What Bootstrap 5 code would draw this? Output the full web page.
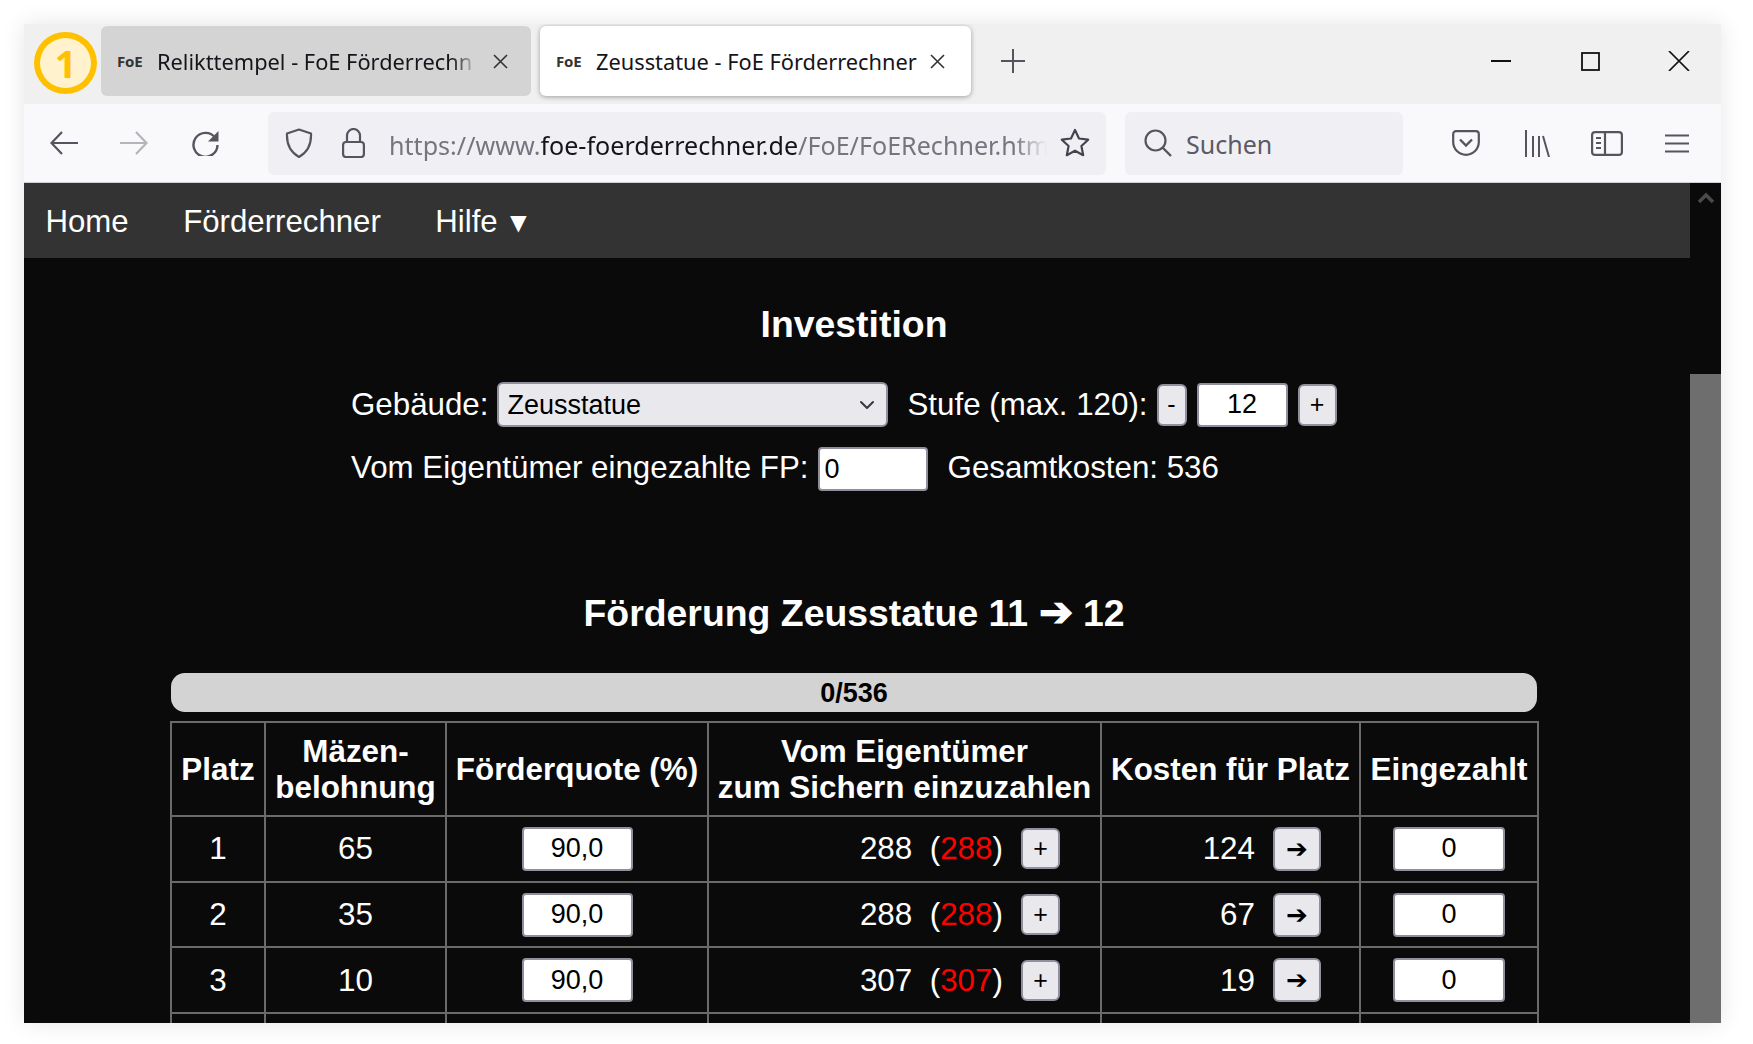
<!DOCTYPE html>
<html lang="de">
<head>
<meta charset="utf-8">
<title>Zeusstatue - FoE Förderrechner</title>
<link href="https://cdn.jsdelivr.net/npm/bootstrap@5.3.0/dist/css/bootstrap.min.css" rel="stylesheet">
<style>
html,body{height:100%;}
body{background:#fff;overflow:hidden;font-family:"Liberation Sans",Arial,sans-serif;}
.win{margin:24px 0 0 24px;width:1697px;height:999px;overflow:hidden;box-shadow:0 0 22px rgba(0,0,0,.10);}
.strip{height:80px;background:#f0f0f0;font-family:"Noto Sans",sans-serif;flex:none;padding-bottom:6px;}
.step{width:63px;height:62px;margin:4px 0 0 10px;background:#fff2cc;border:6px solid #ffc000;border-radius:50%;color:#ffc000;font-weight:700;font-size:38px;line-height:1;flex:none;}
.tabx{height:70px;border-radius:6px;flex:none;font-size:21.8px;color:#15141a;}
.tab-a{width:430px;margin-left:4px;background:#d4d4d4;padding-left:16px;}
.tab-b{width:431px;margin-left:9px;background:#fff;padding-left:16px;box-shadow:0 1px 5px rgba(0,0,0,.35);}
.fav{width:40px;flex:none;font-size:15px;font-weight:700;color:#333;letter-spacing:-.2px;}
.tab-title{white-space:nowrap;flex:none;padding-top:3px;}
.tab-a .tab-title{width:320px;-webkit-mask-image:linear-gradient(90deg,#000 92%,transparent);mask-image:linear-gradient(90deg,#000 92%,transparent);}
.tab-b .tab-title{width:326px;}
.x-a{margin-left:16px;flex:none;}
.x-b{margin-left:8px;flex:none;}
.plus{margin-left:30px;flex:none;}
.w-min{margin-left:466px;flex:none;}
.w-max{margin-left:70px;flex:none;}
.w-close{margin-left:68px;flex:none;}
.tools{height:79px;background:#f9f9fb;border-bottom:1px solid #cfcfd8;flex:none;font-family:"Noto Sans",sans-serif;}
.t-back{margin-left:26px;flex:none;}
.t-fwd{margin-left:42px;flex:none;}
.t-rel{margin-left:43px;flex:none;}
.urlbar{margin-left:48px;width:838px;height:63px;background:#f0f0f4;border-radius:6px;padding-left:17px;flex:none;}
.t-lock{margin-left:29px;flex:none;}
.urltext{margin-left:24px;width:658px;padding-top:6px;font-size:25.1px;white-space:nowrap;color:#75757f;flex:none;-webkit-mask-image:linear-gradient(90deg,#000 95%,transparent);mask-image:linear-gradient(90deg,#000 95%,transparent);}
.urltext b{font-weight:400;color:#15141a;}
.t-star{margin-left:13px;flex:none;}
.searchbar{margin-left:19px;width:278px;height:63px;background:#f0f0f4;border-radius:6px;padding-left:19px;flex:none;}
.searchtext{margin-left:14px;padding-top:4px;font-size:25px;color:#5b5b66;}
.t-pocket{margin-left:49px;flex:none;}
.t-lib{margin-left:44px;flex:none;}
.t-side{margin-left:41px;flex:none;}
.t-menu{margin-left:42px;flex:none;}
.pagewrap{flex:1 1 auto;min-height:0;background:#0a0a0a;color:#fff;}
.content{width:1666px;flex:none;overflow:hidden;}
.scrolltrack{width:31px;flex:none;background:#0a0a0a;}
.scrollup{height:191px;flex:none;padding-top:9px;}
.scrollthumb{flex:1 1 auto;background:#6e6e6e;}
.sitenav{height:75px;background:#333;padding:3px 0 0 21.5px;}
.sitenav a{color:#fff;text-decoration:none;font-size:31.2px;padding:0 27.5px 0 0;margin-right:27px;}
.sitenav a:last-child{margin-right:0;}
.tri{font-size:28px;line-height:1;margin-left:-2px;}
.h-a{font-size:37.4px;font-weight:700;line-height:42px;margin:45px 0 0;text-align:center;width:1660px;}
.h-b{font-size:37.4px;font-weight:700;line-height:42px;margin:0;text-align:center;width:1660px;}
.arr{font-size:41px;line-height:1;}
.formbox{margin:37px 0 0 327px;font-size:31.3px;line-height:45px;}
.formrow{height:45px;}
.formrow2{margin-top:20px;height:44px;margin-bottom:101px;}
.formrow2 span{padding-bottom:3px;}
.sel.form-select{width:391px;height:45px;margin-left:9px;background-color:#e9e9ed;border:2px solid #8f8f9d;border-radius:6px;font-size:27px;color:#000;padding:0 0 0 8px;line-height:43px;background-size:22px 16px;background-position:right 8px center;flex:none;}
.stufe{margin-left:19px;}
.fbtn.btn{background:#e9e9ed;border:2px solid #8f8f9d;border-radius:6px;color:#000;font-size:25px;padding:0;line-height:1;display:flex;align-items:center;justify-content:center;flex:none;}
.b-minus{width:30px;height:42px;margin-left:9px;}
.field.form-control{background:#fff;border:2px solid #8f8f9d;border-radius:4px;color:#000;font-size:27px;padding:0;line-height:1;flex:none;min-height:0;}
.f-stufe{width:91px;height:44px;margin-left:10px;text-align:center;}
.b-plus{width:39px;height:42px;margin-left:10px;}
.f-own{width:110px;height:44px;margin-left:9px;padding-left:5px!important;}
.gesamt{margin-left:20px;}
.bar.progress{margin:39px 0 0 147px;width:1366px;height:39px;background:#d3d3d3;border-radius:14px;color:#000;font-size:27px;font-weight:700;align-items:center;justify-content:center;padding-top:2px;}
.foe.table{margin:9px 0 0 146px;width:1367px;table-layout:fixed;border-collapse:collapse;--bs-table-bg:transparent;--bs-table-color:#fff;color:#fff;font-size:31.4px;border-color:#6a6a6a;}
.foe.table>:not(caption)>*>*{padding:0;border:2px solid #6a6a6a;vertical-align:middle;text-align:center;color:#fff;background:transparent;box-shadow:none;}
.foe.table>thead>tr>th{font-weight:700;height:94px;line-height:36px;padding-top:2px;}
.foe.table>tbody>tr>td{height:65.7px;}
.rightcell{padding-right:40px;}
.arrowcell{padding-right:38px;}
.red{color:#f00;}
.c-plus.btn{width:39px;height:41px;margin-left:18px;}
.c-arrow.btn{width:48px;height:44px;margin-left:18px;font-size:26px;font-family:"DejaVu Sans",sans-serif;}
.f-q{width:111px;height:44px;text-align:center;}
.f-e{width:112px;height:44px;text-align:center;}
</style>
</head>
<body>
<div class="win d-flex flex-column">
  <div class="strip d-flex align-items-center">
    <div class="step d-flex align-items-center justify-content-center">1</div>
    <div class="tabx tab-a d-flex align-items-center">
      <span class="fav">FoE</span><span class="tab-title">Relikttempel - FoE Förderrechn</span>
      <svg class="x-a" width="15" height="15" viewBox="0 0 15 15"><path d="M1 1l13 13M14 1L1 14" stroke="#333" stroke-width="1.6" fill="none"/></svg>
    </div>
    <div class="tabx tab-b d-flex align-items-center">
      <span class="fav">FoE</span><span class="tab-title">Zeusstatue - FoE Förderrechner</span>
      <svg class="x-b" width="15" height="15" viewBox="0 0 15 15"><path d="M1 1l13 13M14 1L1 14" stroke="#333" stroke-width="1.6" fill="none"/></svg>
    </div>
    <svg class="plus" width="24" height="24" viewBox="0 0 24 24"><path d="M12 0v24M0 12h24" stroke="#55555f" stroke-width="2" fill="none"/></svg>
    <svg class="w-min" width="20" height="2" viewBox="0 0 20 2"><path d="M0 1h20" stroke="#111" stroke-width="2"/></svg>
    <svg class="w-max" width="19" height="19" viewBox="0 0 19 19"><rect x="1" y="1" width="17" height="17" fill="none" stroke="#111" stroke-width="1.8"/></svg>
    <svg class="w-close" width="22" height="20" viewBox="0 0 22 20"><path d="M1 0l20 20M21 0L1 20" stroke="#111" stroke-width="1.7" fill="none"/></svg>
  </div>
  <div class="tools d-flex align-items-center">
    <svg class="t-back" width="28" height="24" viewBox="0 0 28 24"><path d="M28 12H2M12 1L1.500 12 12 23" stroke="#55555f" stroke-width="2.200" fill="none"/></svg>
    <svg class="t-fwd" width="28" height="24" viewBox="0 0 28 24"><path d="M0 12h26M16 1l10.500 11L16 23" stroke="#b4b4ba" stroke-width="2.200" fill="none"/></svg>
    <svg class="t-rel" width="29" height="26" viewBox="0 0 29 26"><path d="M24 7.500A12 12 0 1 0 26.500 15" stroke="#55555f" stroke-width="2.400" fill="none"/><path d="M27.500 1v10.500H17z" fill="#55555f"/></svg>
    <div class="urlbar d-flex align-items-center">
      <svg width="28" height="30" viewBox="0 0 28 30"><path d="M14 1.500L2 5.500c-.5 11 3 18.500 12 23.500 9-5 12.500-12.500 12-23.500z" stroke="#55555f" stroke-width="2.200" fill="none" stroke-linejoin="round"/></svg>
      <svg class="t-lock" width="23" height="30" viewBox="0 0 23 30"><path d="M5 14V7.500a6.500 6.500 0 0 1 13 0V14" stroke="#55555f" stroke-width="2.200" fill="none"/><rect x="1.100" y="14" width="20.800" height="15" rx="3" stroke="#55555f" stroke-width="2.200" fill="none"/></svg>
      <div class="urltext">https://www.<b>foe-foerderrechner.de</b>/FoE/FoERechner.htm</div>
      <svg class="t-star" width="30" height="30" viewBox="0 0 30 30"><path d="M15 2l4 8.500 9.200 1.200-6.800 6.300 1.800 9.200L15 22.700 6.800 27.200 8.600 18 1.800 11.700 11 10.500z" stroke="#44444e" stroke-width="2.200" fill="none" stroke-linejoin="round"/></svg>
    </div>
    <div class="searchbar d-flex align-items-center">
      <svg width="28" height="28" viewBox="0 0 28 28"><circle cx="11.500" cy="11.500" r="10" stroke="#55555f" stroke-width="2.200" fill="none"/><path d="M18.500 18.500L27 27" stroke="#55555f" stroke-width="2.400"/></svg>
      <span class="searchtext">Suchen</span>
    </div>
    <svg class="t-pocket" width="28" height="26" viewBox="0 0 28 26"><path d="M4 1.200h20a2.800 2.800 0 0 1 2.800 2.800v8a12.800 12.800 0 0 1-25.600 0V4A2.800 2.800 0 0 1 4 1.200z" stroke="#55555f" stroke-width="2.200" fill="none"/><path d="M8 9.500l6 6 6-6" stroke="#55555f" stroke-width="2.400" fill="none"/></svg>
    <svg class="t-lib" width="26" height="27" viewBox="0 0 26 27"><path d="M2 0v27M9 6v21M15 6v21M19 6l6 21" stroke="#55555f" stroke-width="2" fill="none"/></svg>
    <svg class="t-side" width="32" height="25" viewBox="0 0 32 25"><rect x="1.100" y="1.100" width="29.800" height="22.800" rx="3" stroke="#55555f" stroke-width="2.200" fill="none"/><path d="M14 1v23" stroke="#55555f" stroke-width="2.200"/><path d="M5 7h5M5 12h5M5 17h5" stroke="#55555f" stroke-width="2.200"/></svg>
    <svg class="t-menu" width="24" height="19" viewBox="0 0 24 19"><path d="M0 1.500h24M0 9.500h24M0 17.500h24" stroke="#55555f" stroke-width="2.200"/></svg>
  </div>
  <div class="pagewrap d-flex">
    <div class="content">
      <nav class="sitenav d-flex align-items-center">
        <a href="#">Home</a>
        <a href="#">Förderrechner</a>
        <a href="#">Hilfe <span class="tri">▼</span></a>
      </nav>
      <h3 class="h-a">Investition</h3>
      <div class="formbox">
        <div class="formrow d-flex align-items-center">
          <span>Gebäude:</span>
          <select class="sel form-select"><option>Zeusstatue</option></select>
          <span class="stufe">Stufe (max. 120):</span>
          <button class="fbtn btn b-minus" type="button">-</button>
          <input class="field form-control f-stufe" value="12">
          <button class="fbtn btn b-plus" type="button">+</button>
        </div>
        <div class="formrow2 d-flex align-items-center">
          <span>Vom Eigentümer eingezahlte FP:</span>
          <input class="field form-control f-own" value="0">
          <span class="gesamt">Gesamtkosten: 536</span>
        </div>
      </div>
      <h3 class="h-b">Förderung Zeusstatue 11 <span class="arr">➔</span> 12</h3>
      <div class="bar progress d-flex">0/536</div>
      <table class="foe table">
        <colgroup><col style="width:94px"><col style="width:181px"><col style="width:262px"><col style="width:393px"><col style="width:259px"><col style="width:178px"></colgroup>
        <thead>
          <tr><th>Platz</th><th>Mäzen-<br>belohnung</th><th>Förderquote (%)</th><th>Vom Eigentümer<br>zum Sichern einzuzahlen</th><th>Kosten für Platz</th><th>Eingezahlt</th></tr>
        </thead>
        <tbody>
          <tr><td>1</td><td>65</td><td><div class="d-flex justify-content-center"><input class="field form-control f-q" value="90,0"></div></td>
            <td><div class="rightcell d-flex justify-content-end align-items-center"><span>288&nbsp;&nbsp;(<span class="red">288</span>)</span><button class="fbtn btn c-plus" type="button">+</button></div></td>
            <td><div class="arrowcell d-flex justify-content-end align-items-center"><span>124</span><button class="fbtn btn c-arrow" type="button">➔</button></div></td>
            <td><div class="d-flex justify-content-center"><input class="field form-control f-e" value="0"></div></td></tr>
          <tr><td>2</td><td>35</td><td><div class="d-flex justify-content-center"><input class="field form-control f-q" value="90,0"></div></td>
            <td><div class="rightcell d-flex justify-content-end align-items-center"><span>288&nbsp;&nbsp;(<span class="red">288</span>)</span><button class="fbtn btn c-plus" type="button">+</button></div></td>
            <td><div class="arrowcell d-flex justify-content-end align-items-center"><span>67</span><button class="fbtn btn c-arrow" type="button">➔</button></div></td>
            <td><div class="d-flex justify-content-center"><input class="field form-control f-e" value="0"></div></td></tr>
          <tr><td>3</td><td>10</td><td><div class="d-flex justify-content-center"><input class="field form-control f-q" value="90,0"></div></td>
            <td><div class="rightcell d-flex justify-content-end align-items-center"><span>307&nbsp;&nbsp;(<span class="red">307</span>)</span><button class="fbtn btn c-plus" type="button">+</button></div></td>
            <td><div class="arrowcell d-flex justify-content-end align-items-center"><span>19</span><button class="fbtn btn c-arrow" type="button">➔</button></div></td>
            <td><div class="d-flex justify-content-center"><input class="field form-control f-e" value="0"></div></td></tr>
          <tr><td>&nbsp;</td><td></td><td></td><td></td><td></td><td></td></tr>
        </tbody>
      </table>
    </div>
    <div class="scrolltrack d-flex flex-column">
      <div class="scrollup d-flex justify-content-center">
        <svg width="18" height="12" viewBox="0 0 18 12"><path d="M2 10l7-7 7 7" stroke="#4a4a4a" stroke-width="3.500" fill="none"/></svg>
      </div>
      <div class="scrollthumb"></div>
    </div>
  </div>
</div>
</body>
</html>
